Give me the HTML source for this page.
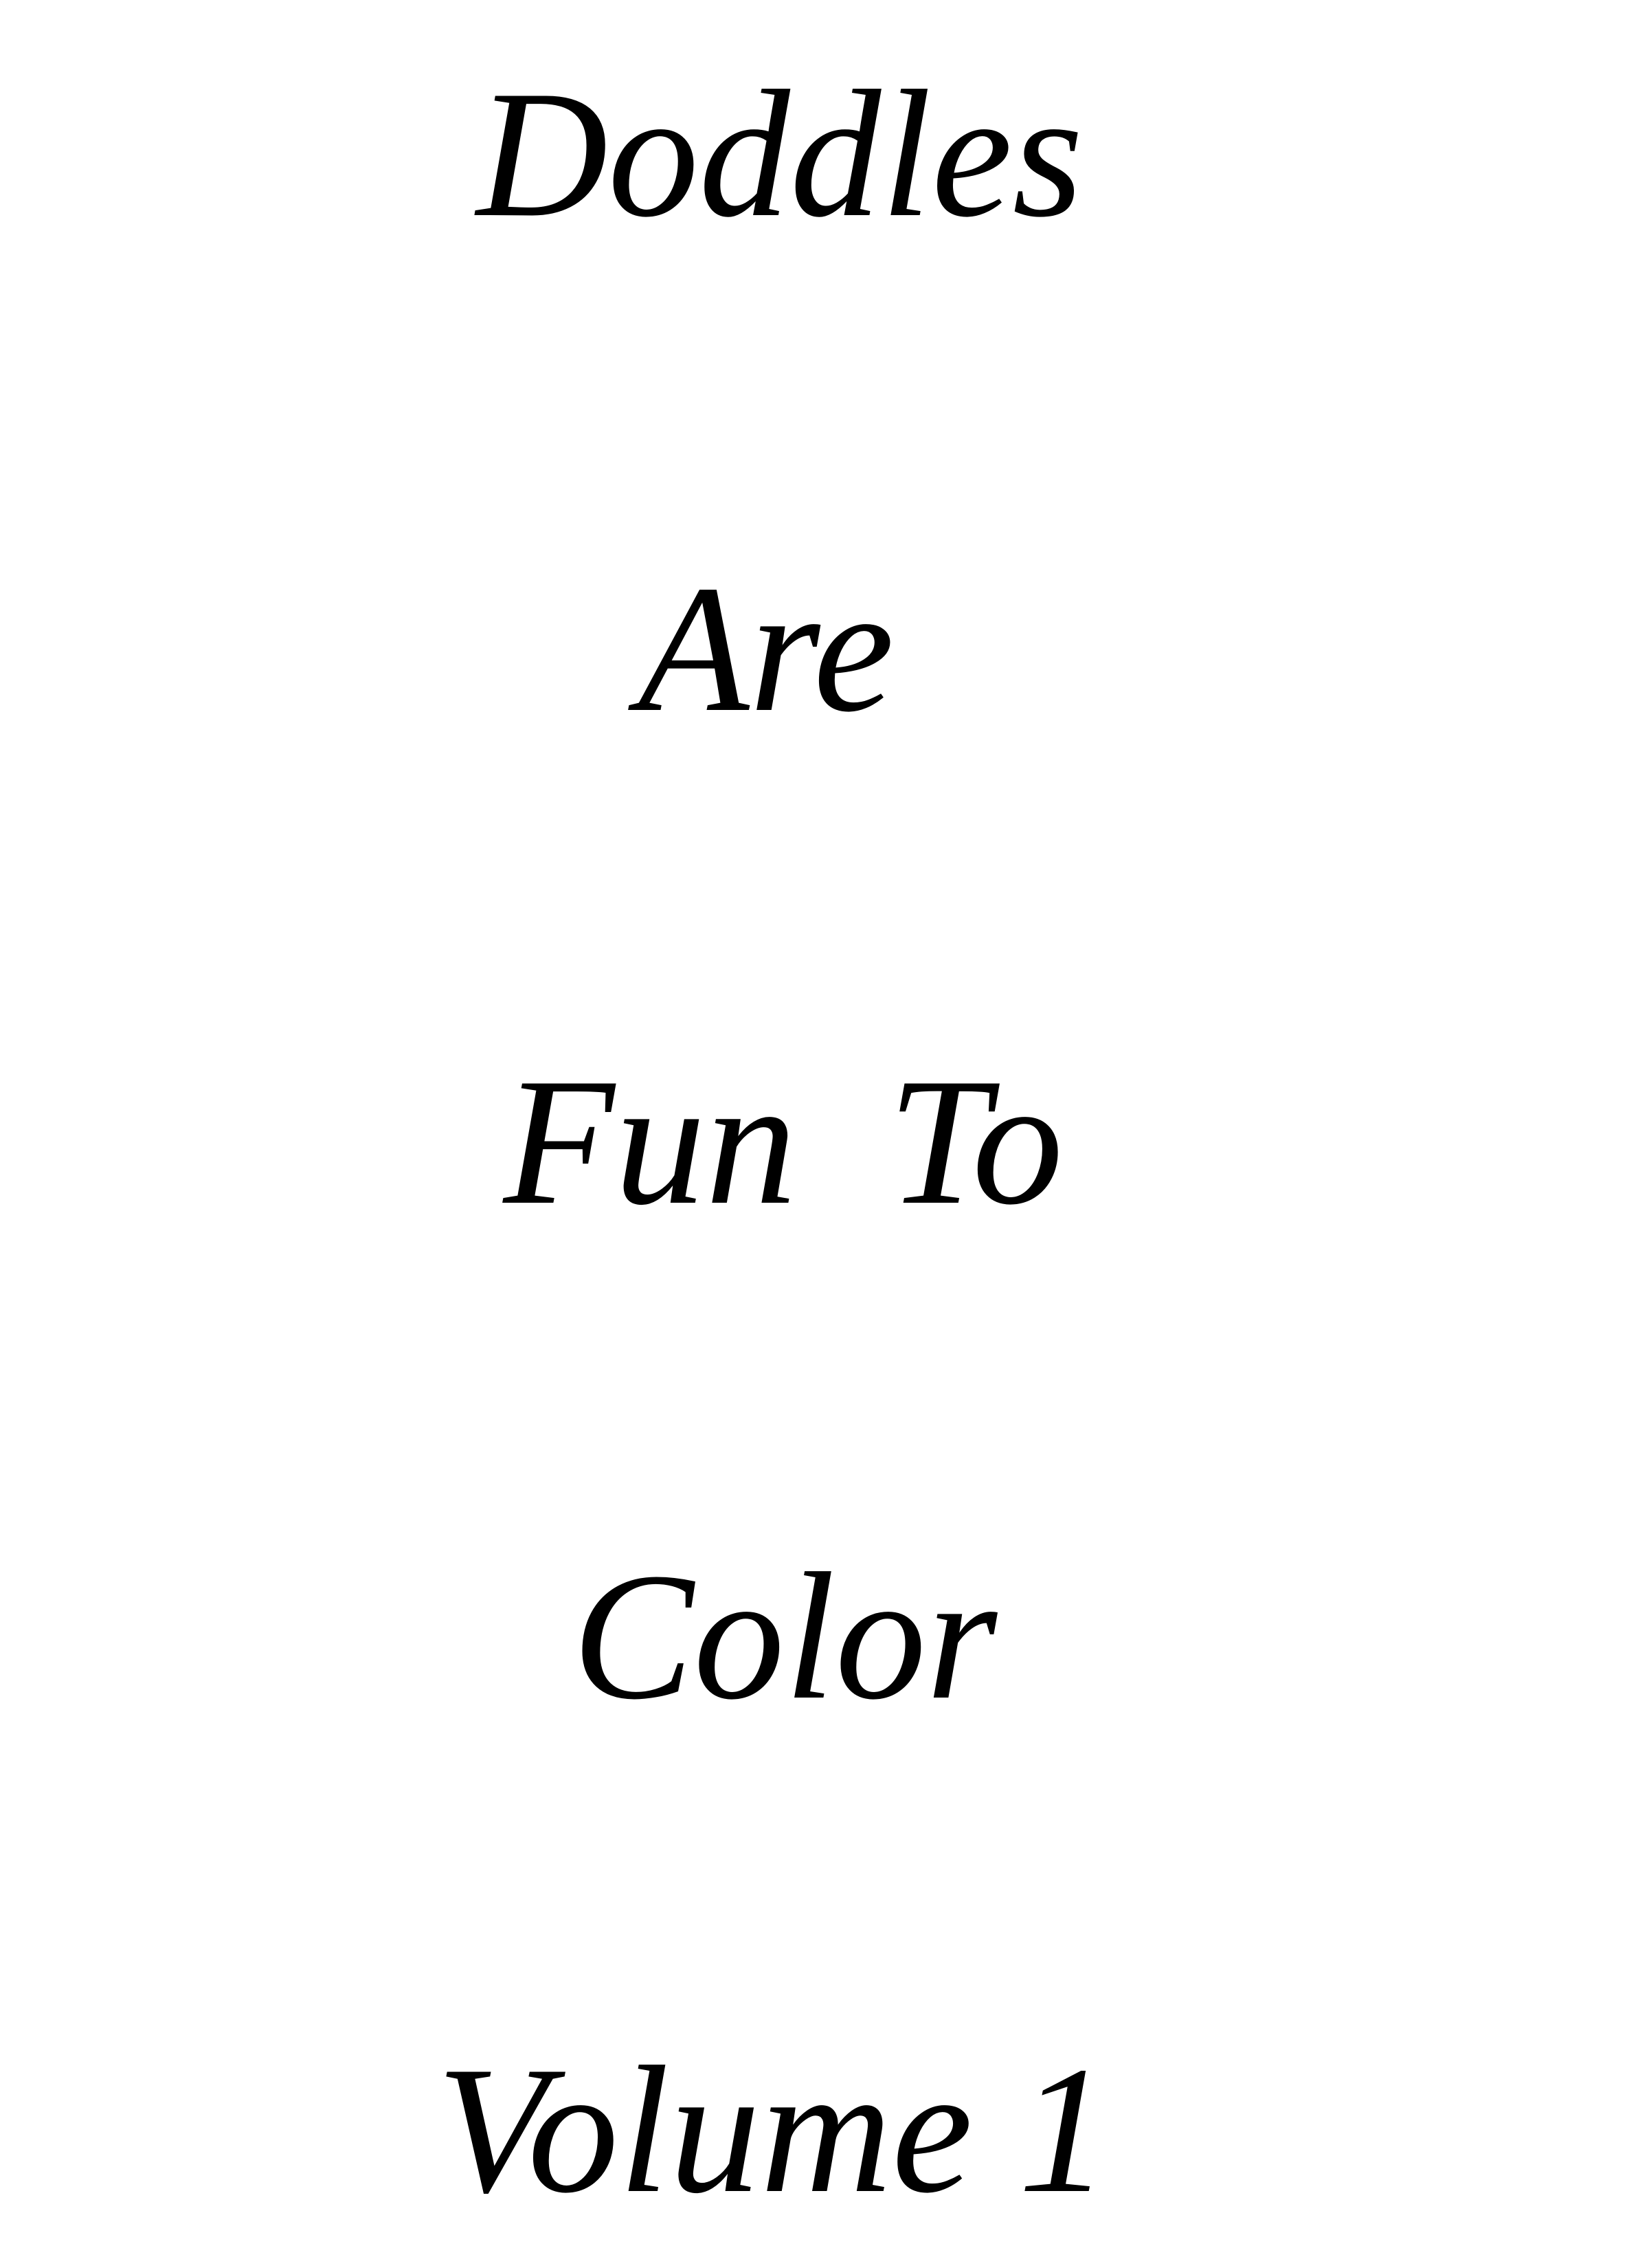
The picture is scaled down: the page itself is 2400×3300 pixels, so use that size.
<!DOCTYPE html>
<html>
<head>
<meta charset="utf-8">
<style>
html,body{margin:0;padding:0;background:#fff;}
body{width:2400px;height:3300px;position:relative;overflow:hidden;}
.t{position:absolute;left:0;width:2270px;text-align:center;height:0;line-height:0;
font-family:"Liberation Serif",serif;font-style:italic;font-size:265px;color:#000;white-space:pre;}
</style>
</head>
<body>
<div class="t" style="top:225px;">Doddles</div>
<div class="t" style="top:945px;width:2230px;">Are</div>
<div class="t" style="top:1662px;width:2280px;">Fun  To</div>
<div class="t" style="top:2382px;width:2284px;">Color</div>
<div class="t" style="top:3100px;width:2250px;">Volume 1</div>
</body>
</html>
